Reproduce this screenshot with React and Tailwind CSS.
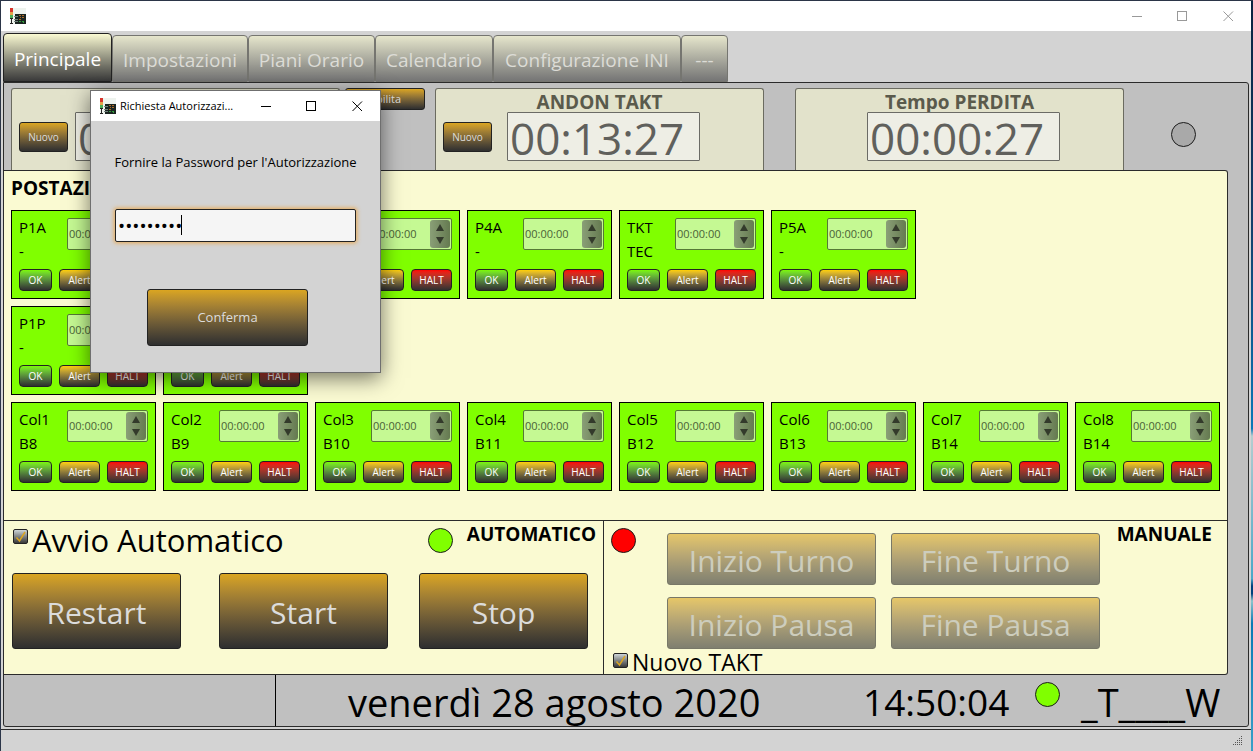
import { useState } from "react";

const FONT = "font-['Open_Sans','Noto_Sans',sans-serif]";

const tabs = [
  { label: "Principale", width: "w-[109px]" },
  { label: "Impostazioni", width: "w-[136px]" },
  { label: "Piani Orario", width: "w-[127px]" },
  { label: "Calendario", width: "w-[118px]" },
  { label: "Configurazione INI", width: "w-[188px]" },
  { label: "---", width: "w-[47px]" },
];

const rows = [
  [
    ["P1A", "-"],
    ["P2A", "-"],
    ["P3A", "-"],
    ["P4A", "-"],
    ["TKT", "TEC"],
    ["P5A", "-"],
  ],
  [
    ["P1P", "-"],
    ["P2P", "-"],
  ],
  [
    ["Col1", "B8"],
    ["Col2", "B9"],
    ["Col3", "B10"],
    ["Col4", "B11"],
    ["Col5", "B12"],
    ["Col6", "B13"],
    ["Col7", "B14"],
    ["Col8", "B14"],
  ],
];

function AppIcon() {
  return (
    <svg width="16" height="17" viewBox="0 0 16 17" aria-hidden="true" className="shrink-0">
      <rect x="0" y="0" width="16" height="16" fill="#eef3ee" />
      <rect x="0" y="0" width="3" height="4" fill="#d8342c" />
      <rect x="0" y="4" width="3" height="3" fill="#e6a54a" />
      <rect x="0" y="7" width="3" height="3" fill="#4fae58" />
      <path d="M1.500 10v5M0 10.500h3M0 15.500h3" stroke="#222" fill="none" />
      <rect x="5" y="6" width="11" height="10" fill="#1a2420" />
      <path d="M4 8.500h4M4 11.500h4M4 13.500h4" stroke="#71807c" />
      <path d="M9 7.500h2M12 7.500h2M10 9.500h1M12 9.500h2M9 11.500h2" stroke="#b06a26" />
      <path d="M9 13.500h2M12 13.500h2M13 14.500h1" stroke="#2f9a3c" />
    </svg>
  );
}

function WindowButtons({ color }) {
  return (
    <div className={`flex h-full ${color}`}>
      <button aria-label="Riduci" className="grid w-[46px] place-items-center">
        <svg width="11" height="11" stroke="currentColor" fill="none">
          <path d="M0 5.500h10" />
        </svg>
      </button>
      <button aria-label="Ingrandisci" className="grid w-[45px] place-items-center">
        <svg width="11" height="11" stroke="currentColor" fill="none">
          <rect x="0.500" y="0.500" width="9" height="9" />
        </svg>
      </button>
      <button aria-label="Chiudi" className="grid w-[46px] place-items-center">
        <svg width="11" height="11" stroke="currentColor" fill="none">
          <path d="M0.500 0.500l9.500 9.500M10 0.500l-9.500 9.500" />
        </svg>
      </button>
    </div>
  );
}

function GoldButton({ className, children, disabled }) {
  return (
    <button
      disabled={disabled}
      className={`rounded-[3px] border border-[#222] bg-linear-to-b from-[#daa520] to-[#2f2f2f] text-[#dcdcdc] disabled:text-[#b0b0b0] disabled:opacity-60 ${className}`}
    >
      {children}
    </button>
  );
}

function Lamp({ className }) {
  return <span className={`size-[25px] shrink-0 rounded-full border border-[#1c1c1c] ${className}`} />;
}

function Check({ label, className }) {
  const [checked, setChecked] = useState(true);
  return (
    <label className={`flex gap-1 ${className}`}>
      <span className="relative mt-1 size-[15px] shrink-0">
        <input
          type="checkbox"
          checked={checked}
          onChange={() => setChecked(!checked)}
          className="block size-[15px] appearance-none rounded-[2px] border border-[#222] bg-linear-to-b from-[#cfd6d8] to-[#3a3a3a]"
        />
        {checked && (
          <svg viewBox="0 0 15 15" className="pointer-events-none absolute inset-0" fill="none">
            <path d="M3.500 8.500l3 3.500 5.500-9" stroke="#daa520" strokeWidth="1.500" />
          </svg>
        )}
      </span>
      {label}
    </label>
  );
}

function Station({ name, sub }) {
  return (
    <div className="flex h-[89px] w-[145px] shrink-0 flex-col justify-between border border-black bg-[#80ff00] p-[7px]">
      <div className="flex justify-between">
        <div className="-mt-[3px] text-[15px] leading-6">
          <p>{name}</p>
          <p>{sub}</p>
        </div>
        <div className="flex h-8 w-[81px] items-center justify-between rounded-[2px] border border-[#557a35] bg-[#c5f993] pr-px">
          <input
            aria-label={`Tempo ${name}`}
            readOnly
            defaultValue="00:00:00"
            className="w-[50px] pl-px text-[11px] text-[#4a6236] outline-none"
          />
          <div className="flex h-7 w-5 flex-col items-center justify-between rounded-[3px] bg-linear-to-r from-[#8a9f77] to-[#657a50] py-1 text-[#333a2b]">
            <button aria-label="Aumenta">
              <svg width="8" height="7" className="block" fill="currentColor">
                <path d="M4 0L8 7H0z" />
              </svg>
            </button>
            <button aria-label="Diminuisci">
              <svg width="8" height="7" className="block" fill="currentColor">
                <path d="M0 0h8L4 7z" />
              </svg>
            </button>
          </div>
        </div>
      </div>
      <div className="flex justify-between text-[10px] text-white">
        <button className="h-[22px] w-[33px] rounded-[4px] border border-[#222] bg-linear-to-b from-[#7cf800] to-[#2f2f2f]">
          OK
        </button>
        <button className="h-[22px] w-[41px] rounded-[4px] border border-[#222] bg-linear-to-b from-[#ffd000] to-[#2f2f2f]">
          Alert
        </button>
        <button className="h-[22px] w-[41px] rounded-[4px] border border-[#222] bg-linear-to-b from-[#ff0000] to-[#2f2f2f]">
          HALT
        </button>
      </div>
    </div>
  );
}

function Takt({ title, time, button, gap = "w-[64px]" }) {
  return (
    <section className="flex h-[82px] w-[329px] shrink-0 rounded-t-[3px] border border-b-0 border-[#6b6b60] bg-[#e2e2cb] px-[7px]">
      <div className={`${gap} shrink-0 pt-[33px]`}>
        {button && <GoldButton className="block h-[30px] w-[49px] text-[10px]">Nuovo</GoldButton>}
      </div>
      <div className="flex w-[193px] flex-col items-center">
        <h2 className="h-[23px] pr-2 text-[19px] leading-[26px] font-bold whitespace-nowrap text-[#5a5a4c]">{title}</h2>
        <div className="h-[49px] w-full rounded-[1px] border border-[#6b6b66] bg-[#eeeee5] pl-[2px] text-[44px] leading-[51px] text-[#60605c]">
          {time}
        </div>
      </div>
    </section>
  );
}

function AuthDialog() {
  const [password, setPassword] = useState("password1");
  return (
    <div
      role="dialog"
      aria-labelledby="auth-title"
      className="absolute top-[89px] left-[89px] flex w-[291px] flex-col border border-[#6f6f6f] bg-[#d3d3d3] shadow-[0_5px_20px_rgba(0,0,0,0.55)]"
    >
      <header className="flex h-[30px] items-center bg-white pl-[9px]">
        <AppIcon />
        <h2 id="auth-title" className="ml-1 grow text-[11px] whitespace-nowrap">
          Richiesta Autorizzazi...
        </h2>
        <WindowButtons color="text-black" />
      </header>
      <form className="flex flex-col items-center pt-8 pb-[26px]" onSubmit={(e) => e.preventDefault()}>
        <label htmlFor="password" className="text-[13px] leading-[18px]">
          Fornire la Password per l'Autorizzazione
        </label>
        <div className="relative mt-[38px]">
          <input
            id="password"
            type="password"
            value={password}
            onChange={(e) => setPassword(e.target.value)}
            className="peer block h-[33px] w-[241px] rounded-[2px] border border-[#222] bg-[#f5f5f5] px-[2px] text-[19px] shadow-[0_0_4px_1px_#e8a850] outline-none"
          />
          {/* resting caret, replaced by the native one on focus */}
          <span className="pointer-events-none absolute top-[6px] left-[66px] h-5 w-px bg-black peer-focus:hidden" />
        </div>
        <GoldButton className="mt-[47px] mr-4 h-[57px] w-[161px] pt-px text-[13px]">Conferma</GoldButton>
      </form>
    </div>
  );
}

export default function App() {
  return (
    <div
      className={`flex min-h-screen border-t border-l border-[#2b3548] bg-[linear-gradient(#0a2340_0%,#12406c_30%,#0a78b8_57%,#b4cdd0_58%,#4aa8c8_77%,#00407c_78%,#00407c_79%,#8cc4cc_80%,#0a7ab5_83%,#3aa0c8_100%)] pr-[2px] text-black ${FONT}`}
    >
      <div className="relative flex min-w-0 grow flex-col bg-[#d3d3d3]">
        <header className="flex h-[30px] items-center justify-between bg-white pl-[9px]">
          <AppIcon />
          <WindowButtons color="text-[#999]" />
        </header>

        <nav className="flex h-[51px] items-end pl-[2px] text-[19px]">
          {tabs.map((tab, i) => (
            <button
              key={tab.label}
              className={`${tab.width} shrink-0 rounded-t-[4px] border bg-linear-to-b pt-1 whitespace-nowrap ${
                i === 0
                  ? "h-[49px] border-[#222] from-[#fafad2] to-[#3a3a3a] text-white"
                  : "h-[47px] border-[#757570] from-[#e6e6cc] to-[#757575] text-[#dcdcd6]"
              }`}
            >
              {tab.label}
            </button>
          ))}
        </nav>

        <main className="mx-[2px] flex grow flex-col rounded-tr-[3px] rounded-b-[3px] border border-[#2b2b2b] bg-[#c0c0c0]">
          <div className="flex items-start pt-[5px] pl-[7px]">
            <Takt time="00:14:50" button gap="w-[56px]" />
            <GoldButton className="ml-[5px] h-[22px] w-20 text-[11px]">Abilita</GoldButton>
            <div className="w-[10px]" />
            <Takt title="ANDON TAKT" time="00:13:27" button />
            <div className="w-[31px]" />
            <Takt title="Tempo PERDITA" time="00:00:27" />
            <Lamp className="mt-[34px] ml-[47px] bg-[#a9a9a9]" />
          </div>

          <div className="mr-5 flex flex-col rounded-r-[3px] border-y border-r border-[#2b2b2b] bg-[#fafad2]">
            <section className="h-[349px] px-[7px] pt-1">
              <h2 className="mb-2 text-[19px] leading-[27px] font-bold">POSTAZIONI</h2>
              <div className="flex flex-col gap-[7px]">
                {rows.map((row, i) => (
                  <div key={i} className="flex gap-[7px]">
                    {row.map(([name, sub]) => (
                      <Station key={name} name={name} sub={sub} />
                    ))}
                  </div>
                ))}
              </div>
            </section>

            <div className="flex h-[154px] border-t border-[#2b2b2b]">
              <section className="w-[600px] shrink-0 border-r border-[#2b2b2b] pr-[7px] pl-2">
                <div className="flex h-[52px] justify-between">
                  <Check label="Avvio Automatico" className="pt-1 pl-px text-[31px] leading-[31px]" />
                  <div className="flex gap-[14px] pt-[7px]">
                    <Lamp className="bg-[#80ff00]" />
                    <h2 className="-mt-2 text-[19px] leading-[28px] font-bold">AUTOMATICO</h2>
                  </div>
                </div>
                <div className="flex text-[30px]">
                  <GoldButton className="h-[76px] w-[169px] pt-[2px]">Restart</GoldButton>
                  <GoldButton className="ml-[38px] h-[76px] w-[169px] pt-[2px]">Start</GoldButton>
                  <GoldButton className="ml-[31px] h-[76px] w-[169px] pt-[2px]">Stop</GoldButton>
                </div>
              </section>
              <section className="flex grow justify-between pr-[15px] pl-[7px]">
                <Lamp className="mt-[7px] bg-[#ff0000]" />
                <div className="grow">
                  <div className="ml-[31px] grid w-[433px] grid-cols-2 gap-x-[15px] gap-y-3 pt-3 text-[30px] leading-[46px]">
                    <GoldButton disabled className="h-[52px] pt-1">Inizio Turno</GoldButton>
                    <GoldButton disabled className="h-[52px] pt-1">Fine Turno</GoldButton>
                    <GoldButton disabled className="h-[52px] pt-1">Inizio Pausa</GoldButton>
                    <GoldButton disabled className="h-[52px] pt-1">Fine Pausa</GoldButton>
                  </div>
                  <Check label="Nuovo TAKT" className="-ml-[23px] text-[23px] leading-[26px]" />
                </div>
                <h2 className="text-[19px] leading-[27px] font-bold">MANUALE</h2>
              </section>
            </div>
          </div>

          <footer className="flex h-[51px] items-stretch text-[38px] leading-[54px]">
            <div className="w-[272px] border-r border-black" />
            <p className="ml-[72px] w-[515px] whitespace-nowrap">venerdì 28 agosto 2020</p>
            <p className="w-[172px] text-[37px]">14:50:04</p>
            <Lamp className="mt-[7px] bg-[#80ff00]" />
            <p className="ml-[21px] whitespace-nowrap">_T____W</p>
          </footer>
        </main>

        <div className="mt-[2px] flex h-[22px] items-end justify-end border-t border-[#2b2b2b] pr-2 pb-[5px]">
          <svg width="10" height="10" fill="#555" aria-hidden="true">
            {[0, 1, 2, 3, 4].map((r) =>
              Array.from({ length: r + 1 }, (_, c) => (
                <rect key={`${r}-${c}`} x={8 - c * 2} y={r * 2} width="1" height="1" />
              ))
            )}
          </svg>
        </div>

        <AuthDialog />
      </div>
    </div>
  );
}
